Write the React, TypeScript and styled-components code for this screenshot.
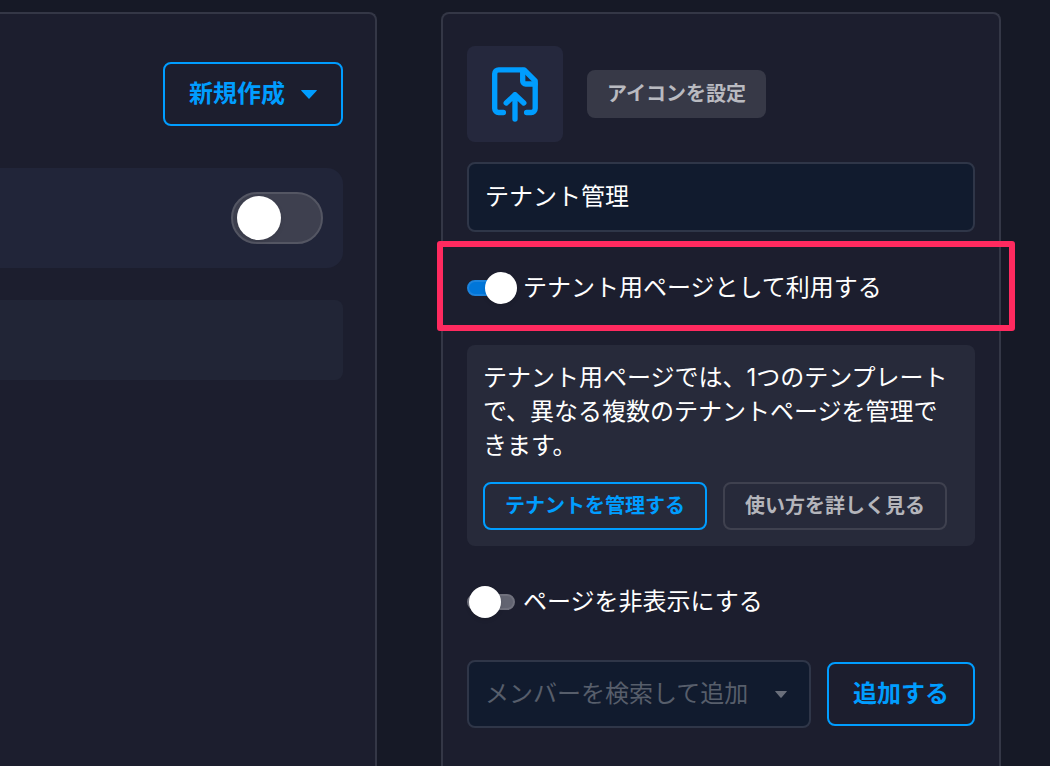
import React, { useState } from "react";
import styled, { createGlobalStyle, css } from "styled-components";

const GlobalStyle = createGlobalStyle`
  *, *::before, *::after { box-sizing: border-box; }
  body {
    margin: 0;
    background: #161926;
    color: #fff;
    font-family: Inter, "Noto Sans CJK JP", sans-serif;
    font-size: 24px;
    line-height: 34px;
    overflow: hidden;
  }
  button, input, select { font: inherit; color: inherit; margin: 0; }
`;

const Page = styled.div`
  display: flex;
  gap: 64px;
  min-height: 100vh;
  padding: 12px 49px 0 0;
`;

const panel = css`
  background: #1c1e2e;
  border: 2px solid #343746;
  border-bottom: 0;
`;

const MainPanel = styled.main`
  ${panel}
  flex: 1;
  min-width: 0;
  border-left: 0;
  border-top-right-radius: 8px;
  padding: 48px 32px 0 0;
  display: flex;
  flex-direction: column;
`;

const SidePanel = styled.aside`
  ${panel}
  flex: 0 0 560px;
  border-radius: 8px 8px 0 0;
  padding: 32px 24px 0;
`;

const Toolbar = styled.div`
  display: flex;
  justify-content: flex-end;
  margin-bottom: 42px;
`;

const Button = styled.button<{ $size?: "small"; $tone?: "outline" | "muted" | "filled" }>`
  display: inline-flex;
  align-items: center;
  justify-content: center;
  flex: none;
  white-space: nowrap;
  cursor: pointer;
  font-weight: 600;
  line-height: 32px;
  border-radius: 8px;
  background: transparent;
  border: 2px solid #009dff;
  color: #009dff;
  height: 64px;
  padding: 0 24px;
  gap: 16px;
  ${(p) => p.$size === "small" && css`
    height: 48px;
    padding: 0 20px;
    font-size: 20px;
  `}
  ${(p) => p.$tone === "muted" && css`
    border-color: #3f414f;
    color: #b4b5bb;
  `}
  ${(p) => p.$tone === "filled" && css`
    border: 0;
    background: #373947;
    color: #b9bac0;
  `}
`;

const SwitchCard = styled.div`
  display: flex;
  align-items: center;
  justify-content: flex-end;
  height: 100px;
  padding-right: 20px;
  margin-bottom: 32px;
  border-radius: 0 16px 16px 0;
  background: #212539;
`;

const EmptyCard = styled.div`
  height: 80px;
  border-radius: 0 8px 8px 0;
  background: #212536;
`;

const LargeSwitch = styled.input`
  appearance: none;
  display: flex;
  align-items: center;
  width: 92px;
  height: 52px;
  padding: 0 4px;
  border: 2px solid #545663;
  border-radius: 26px;
  background: #3e404f;
  cursor: pointer;

  &::before {
    content: "";
    width: 44px;
    height: 44px;
    border-radius: 50%;
    background: #fff;
    box-shadow: 0 2px 4px rgba(0, 0, 0, 0.1);
  }
  &:checked {
    justify-content: flex-end;
    background: #0076d9;
  }
`;

const IconRow = styled.div`
  display: flex;
  align-items: center;
  gap: 24px;
  margin-bottom: 20px;
`;

const IconBox = styled.div`
  display: grid;
  place-items: center;
  width: 96px;
  height: 96px;
  border-radius: 8px;
  background: #25283d;
`;

const field = css`
  width: 100%;
  padding: 0 16px;
  border: 2px solid #2f3648;
  border-radius: 8px;
  background: #111b2e;
  outline: none;
`;

const TextField = styled.input`
  ${field}
  display: block;
  height: 70px;
  padding-bottom: 6px;
`;

const SwitchRow = styled.div`
  position: relative;
  padding: 39px 0;
`;

const SwitchLabel = styled.label`
  display: flex;
  align-items: center;
  gap: 8px;
  cursor: pointer;
`;

const Highlight = styled.div`
  position: absolute;
  inset: 9px -40px 13px -30px;
  border: 6px solid #ff2a5f;
  border-radius: 3px;
  pointer-events: none;
`;

const SmallSwitch = styled.input`
  appearance: none;
  flex: none;
  display: flex;
  align-items: center;
  width: 48px;
  height: 16px;
  border: 2px solid #70717d;
  border-radius: 8px;
  background: #626471;
  cursor: pointer;

  &::before {
    content: "";
    flex: none;
    width: 32px;
    height: 32px;
    border-radius: 50%;
    background: #fff;
    box-shadow: 0 2px 4px rgba(0, 0, 0, 0.1);
  }
  &:checked {
    border-color: #1c83dc;
    background: #0076d9;
  }
  &:checked::before {
    margin-left: 16px;
  }
`;

const Notice = styled.section`
  margin-top: 1px;
  padding: 16px;
  border-radius: 8px;
  background: #272a3a;
`;

const NoticeText = styled.p`
  margin: 0 0 19px;
`;

const NoticeActions = styled.div`
  display: flex;
  gap: 16px;
`;

const MemberRow = styled.div`
  display: flex;
  align-items: center;
  gap: 16px;
  height: 72px;
`;

const SelectWrap = styled.div`
  position: relative;
  flex: 1;
  min-width: 0;
`;

const Select = styled.select`
  ${field}
  display: block;
  appearance: none;
  height: 68px;
  color: #575e6b;
  cursor: pointer;
`;

const SelectCaret = styled.span`
  position: absolute;
  inset: 0 24px 0 auto;
  display: flex;
  align-items: center;
  color: #6a6f7b;
  pointer-events: none;
`;

function Caret({ width, height }: { width: number; height: number }) {
  return (
    <svg width={width} height={height} viewBox="0 0 16 9" preserveAspectRatio="none" fill="currentColor" aria-hidden="true">
      <path d="M.6 0h14.8c.4 0 .6.4.3.7L8.5 8.6c-.3.3-.7.3-1 0L.3.7C0 .4.2 0 .6 0Z" />
    </svg>
  );
}

function PageUploadIcon() {
  return (
    <svg width="64" height="64" viewBox="0 0 64 64" fill="none" stroke="#009dff" strokeWidth="5.33" strokeLinecap="round" strokeLinejoin="round" aria-hidden="true">
      <path d="M20.4 50.5H15.7a4 4 0 0 1-4-4V11.8a4 4 0 0 1 4-4H41.2L52.2 18.9V46.5a4 4 0 0 1-4 4H43.6" />
      <path d="M39.7 8.5V19a3 3 0 0 0 3 3H52" />
      <path d="M32 57V32.7M23.2 41l8.8-8.3L40.8 41" />
    </svg>
  );
}

export default function App() {
  const [name, setName] = useState("テナント管理");
  return (
    <>
      <GlobalStyle />
      <Page>
        <MainPanel>
          <Toolbar>
            <Button type="button">
              新規作成
              <Caret width={16} height={9} />
            </Button>
          </Toolbar>
          <SwitchCard>
            <LargeSwitch type="checkbox" role="switch" aria-label="有効" />
          </SwitchCard>
          <EmptyCard />
        </MainPanel>

        <SidePanel>
          <IconRow>
            <IconBox>
              <PageUploadIcon />
            </IconBox>
            <Button type="button" $size="small" $tone="filled">アイコンを設定</Button>
          </IconRow>
          <TextField aria-label="ページ名" value={name} onChange={(e) => setName(e.target.value)} />
          <SwitchRow>
            <SwitchLabel>
              <SmallSwitch type="checkbox" role="switch" defaultChecked />
              テナント用ページとして利用する
            </SwitchLabel>
            <Highlight />
          </SwitchRow>
          <Notice>
            <NoticeText>テナント用ページでは、1つのテンプレートで、異なる複数のテナントページを管理できます。</NoticeText>
            <NoticeActions>
              <Button type="button" $size="small">テナントを管理する</Button>
              <Button type="button" $size="small" $tone="muted">使い方を詳しく見る</Button>
            </NoticeActions>
          </Notice>
          <SwitchRow>
            <SwitchLabel>
              <SmallSwitch type="checkbox" role="switch" />
              ページを非表示にする
            </SwitchLabel>
          </SwitchRow>
          <MemberRow>
            <SelectWrap>
              <Select aria-label="メンバー" defaultValue="">
                <option value="">メンバーを検索して追加</option>
              </Select>
              <SelectCaret>
                <Caret width={12} height={7} />
              </SelectCaret>
            </SelectWrap>
            <Button type="button">追加する</Button>
          </MemberRow>
        </SidePanel>
      </Page>
    </>
  );
}
